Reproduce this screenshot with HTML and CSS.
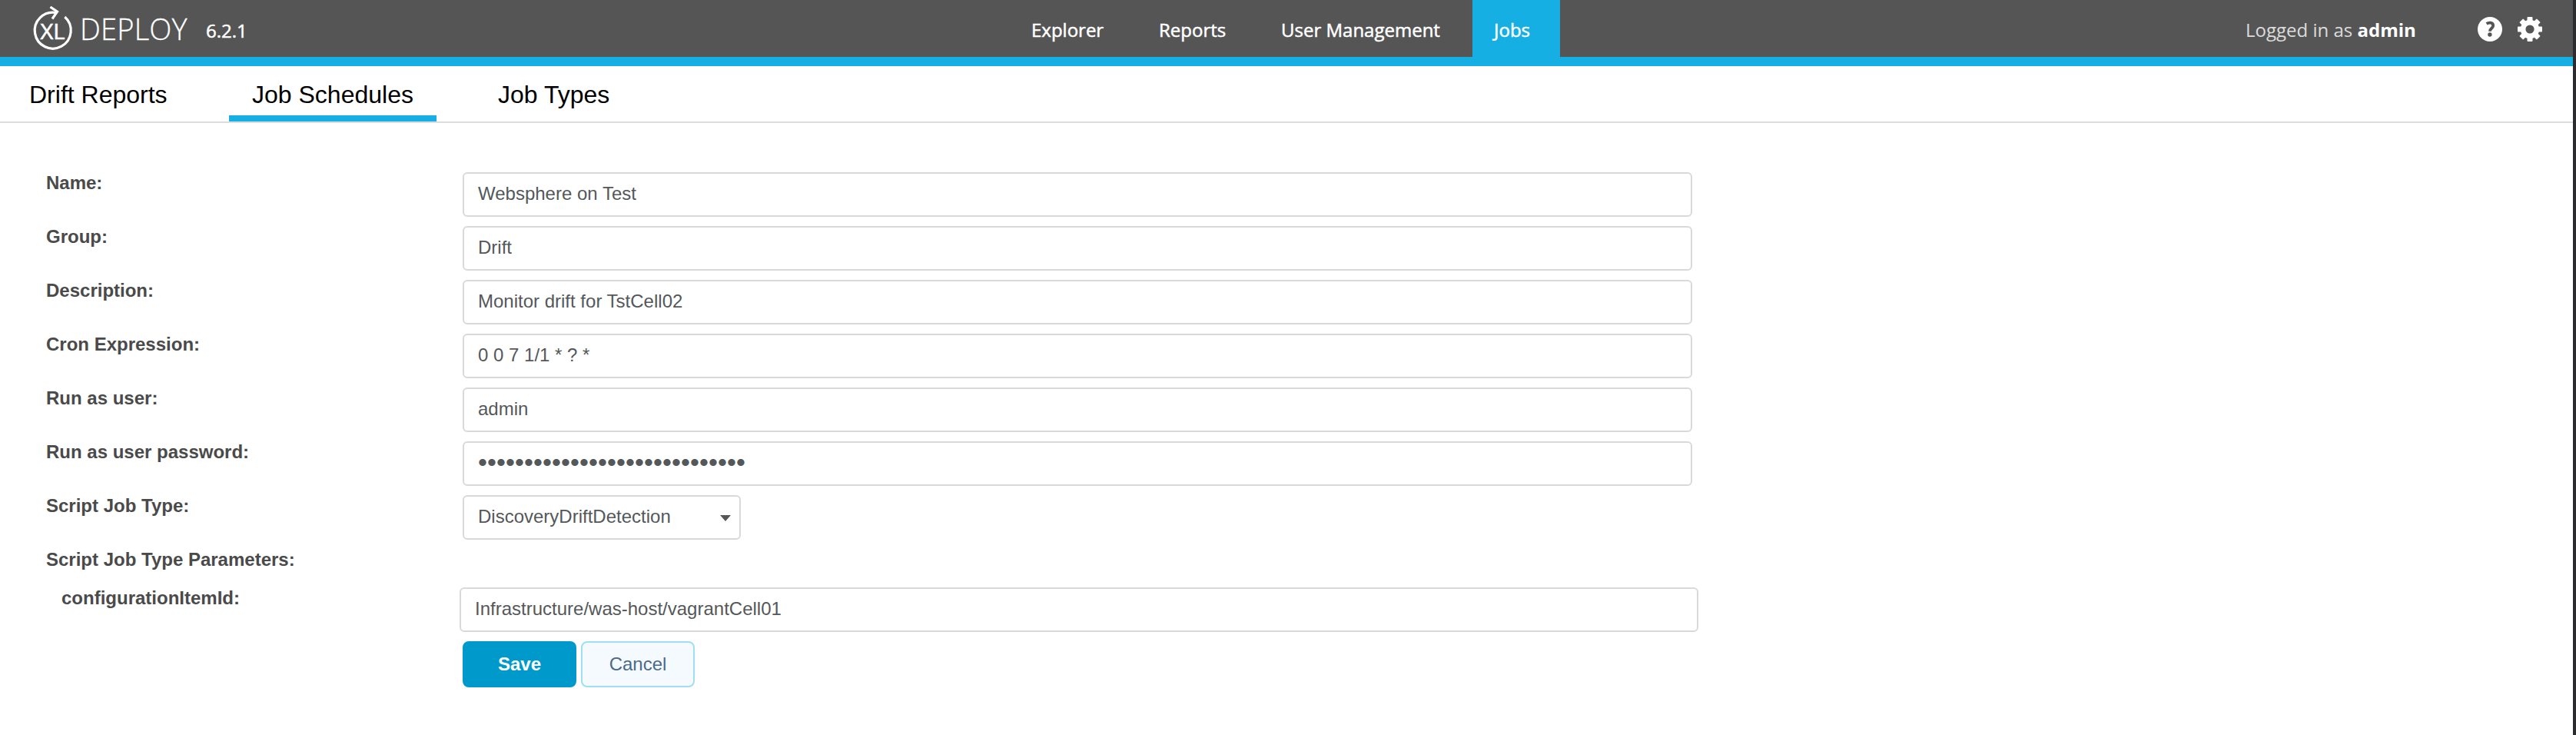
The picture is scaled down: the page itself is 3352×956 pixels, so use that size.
FILE: index.html
```html
<!DOCTYPE html>
<html lang="en">
<head>
<meta charset="utf-8">
<title>XL Deploy - Job Schedules</title>
<link rel="stylesheet" href="styles.css">
</head>
<body>
<div class="page">
  <header class="topbar">
    <div class="brand">
      <svg class="logo" width="60" height="66" viewBox="38 4 60 66">
        <path d="M84.300 22A23.500 23.500 0 1 1 73 16.500" fill="none" stroke="#fff" stroke-width="3.200"/>
        <path d="M65.500 9L74.500 15.200L68 24.500" fill="none" stroke="#fff" stroke-width="3.200"/>
        <text class="logo-xl" x="52.500" y="51" textLength="32" lengthAdjust="spacingAndGlyphs">XL</text>
      </svg>
      <span class="product">DEPLOY</span>
      <span class="version">6.2.1</span>
    </div>
    <nav class="nav">
      <a class="nav-item explorer">Explorer</a>
      <a class="nav-item reports">Reports</a>
      <a class="nav-item users">User Management</a>
      <a class="nav-item active">Jobs</a>
    </nav>
    <div class="account">
      <span class="login">Logged in as <b>admin</b></span>
      <svg class="help" width="32" height="32" viewBox="0 0 32 32">
        <circle cx="16" cy="16" r="16" fill="#fff"/>
        <path d="M11.600 8.800C14.500 6.900 20.200 6.900 20.200 11.300C20.200 14.700 16 14.800 16 18.700" fill="none" stroke="#555" stroke-width="3.800"/>
        <circle cx="15.900" cy="23" r="2.700" fill="#555"/>
      </svg>
      <svg class="gear" width="32" height="32" viewBox="-16 -16 32 32">
        <circle r="8.900" fill="none" stroke="#fff" stroke-width="6.600"/>
        <g fill="#fff">
          <rect id="t" x="-3.500" y="-16" width="7" height="7" rx="1"/>
          <use href="#t" transform="rotate(45)"/><use href="#t" transform="rotate(90)"/><use href="#t" transform="rotate(135)"/><use href="#t" transform="rotate(180)"/><use href="#t" transform="rotate(225)"/><use href="#t" transform="rotate(270)"/><use href="#t" transform="rotate(315)"/>
        </g>
      </svg>
    </div>
  </header>
  <nav class="tabs">
    <a class="tab first">Drift Reports</a>
    <a class="tab current">Job Schedules</a>
    <a class="tab">Job Types</a>
  </nav>
  <main class="form">
    <div class="row"><label class="label">Name:</label><div class="field">Websphere on Test</div></div>
    <div class="row"><label class="label">Group:</label><div class="field">Drift</div></div>
    <div class="row"><label class="label">Description:</label><div class="field">Monitor drift for TstCell02</div></div>
    <div class="row"><label class="label">Cron Expression:</label><div class="field">0 0 7 1/1 * ? *</div></div>
    <div class="row"><label class="label">Run as user:</label><div class="field">admin</div></div>
    <div class="row"><label class="label">Run as user password:</label><div class="field password">•••••••••••••••••••••••••••••</div></div>
    <div class="row"><label class="label">Script Job Type:</label><div class="field select">DiscoveryDriftDetection<svg class="caret" width="14" height="8" viewBox="0 0 14 8"><path d="M0 0H14L7 8Z" fill="#54585a"/></svg></div></div>
    <div class="row heading"><label class="label">Script Job Type Parameters:</label></div>
    <div class="row param"><label class="label">configurationItemId:</label><div class="field">Infrastructure/was-host/vagrantCell01</div></div>
    <div class="actions"><button class="btn save">Save</button><button class="btn cancel">Cancel</button></div>
  </main>
</div>
</body>
</html>
```

FILE: styles.css
```css
* { box-sizing: border-box; }
body { margin: 0; background: #2b2c2e; font-family: "Liberation Sans", Arial, sans-serif; }
.page { width: 3348px; height: 956px; background: #fff; overflow: hidden; }
.topbar { display: flex; height: 86px; background: #555; border-bottom: 12px solid #16afe3; font-family: "Open Sans", sans-serif; color: #fff; white-space: nowrap; }
.brand { display: flex; width: 1314px; padding-left: 38px; }
.logo { margin-top: 4px; flex: none; }
.logo-xl { font: 400 28px "Open Sans", sans-serif; fill: #fff; stroke: #fff; stroke-width: 0.6px; }
.product { width: 142px; margin-left: 6px; font-size: 38px; font-weight: 300; line-height: 52px; padding-top: 11px; letter-spacing: 0.2px; -webkit-text-stroke: 0.3px #fff; }
.version { margin-left: 22px; font-size: 24px; line-height: 34px; padding-top: 23px; -webkit-text-stroke: 0.5px #fff; }
.nav { display: flex; font-size: 24px; line-height: 34px; }
.nav-item { height: 74px; padding: 22px 0 0 28px; -webkit-text-stroke: 0.5px #fff; }
.explorer { width: 166px; }
.reports { width: 159px; }
.users { width: 277px; }
.active { width: 114px; background: #16afe3; }
.account { display: flex; margin-left: 892px; }
.login { width: 302px; font-size: 24px; line-height: 34px; padding-top: 22px; color: #dcdcdc; }
.login b { color: #fff; }
.help, .gear { margin-top: 22px; flex: none; }
.gear { margin-left: 20px; }
.tabs { display: flex; height: 74px; border-bottom: 2px solid #ddd; font-size: 32px; line-height: 36px; color: #000; }
.tab { padding: 19px 0 0 49px; height: 72px; white-space: nowrap; }
.tab.first { width: 298px; padding-left: 38px; }
.tab.current { width: 270px; padding-left: 30px; border-bottom: 8px solid #16afe3; }
.tab:last-child { padding-left: 80px; }
.form { padding: 64px 0 0 60px; font-size: 24px; color: #4a4a4a; }
.row { display: flex; height: 70px; }
.label { width: 542px; font-weight: 700; line-height: 28px; white-space: nowrap; }
.field { width: 1600px; height: 58px; border: 2px solid #d9d9d9; border-radius: 6px; padding: 12px 18px; line-height: 28px; color: #54585a; white-space: nowrap; }
.password { font-size: 34px; letter-spacing: 0.1px; padding-top: 11px; }
.select { display: flex; width: 362px; justify-content: space-between; padding-right: 11px; }
.caret { margin-top: 12px; }
.heading { height: 50px; }
.param { padding-left: 20px; }
.param .label { width: 518px; }
.param .field { width: 1612px; }
.actions { display: flex; gap: 6px; padding-left: 542px; }
.btn { width: 148px; height: 60px; border-radius: 8px; border: 2px solid #0099cc; font: 24px "Liberation Sans", Arial, sans-serif; padding: 0; }
.save { background: #0099cc; color: #fff; font-weight: 700; }
.cancel { background: #f5faff; border-color: #9fdff2; color: #4b6a88; }
```
